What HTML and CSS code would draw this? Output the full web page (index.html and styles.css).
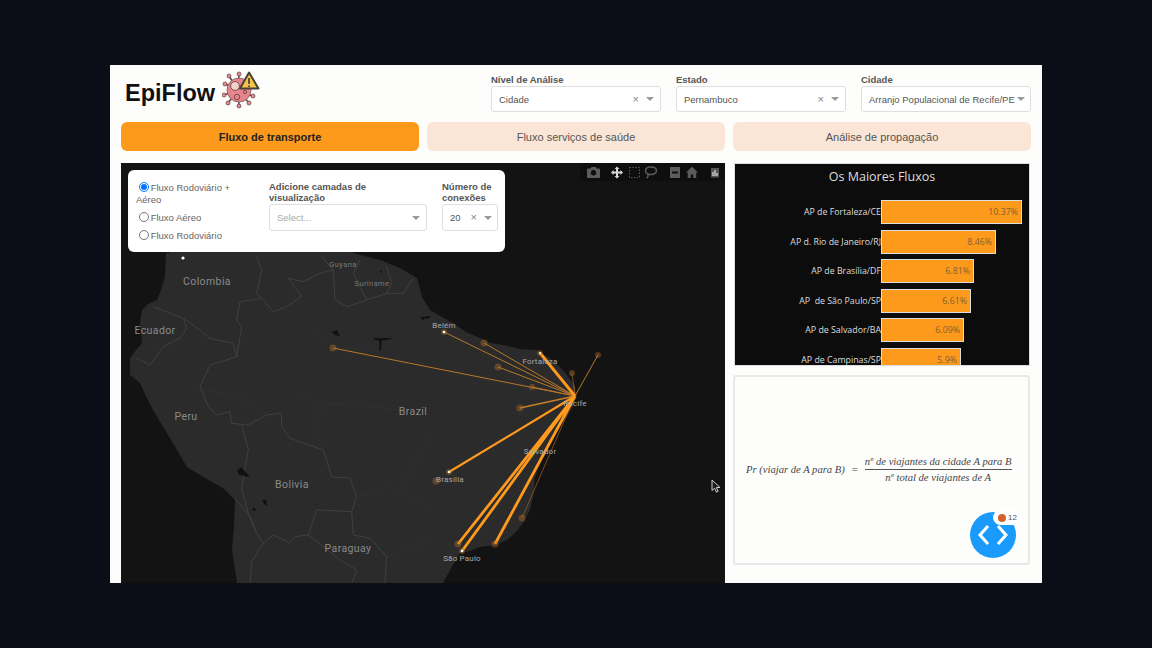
FILE: index.html
```html
<!DOCTYPE html>
<html lang="pt">
<head>
<meta charset="utf-8">
<title>EpiFlow</title>
<link rel="stylesheet" href="styles.css">
</head>
<body>
<div class="page">
  <header class="header">
    <div class="brand">
      <span class="brand-name">EpiFlow</span>
      <svg class="brand-icon" viewBox="0 0 38 38" width="38" height="38">
        <g stroke="#5a4444" stroke-width="1.5" stroke-linecap="round" fill="none">
          <path d="M16 19 3 13M16 19 2 24M16 19 6 32M16 19l1 16M16 19l11 13M16 19 30 25M16 19 7 5M16 19 17 3M16 19l11-12"/>
        </g>
        <g fill="#e58a8f" stroke="#5a4040" stroke-width=".7">
          <circle cx="3" cy="13" r="2"/><circle cx="2" cy="24" r="2"/><circle cx="6" cy="32" r="2"/><circle cx="17" cy="35" r="2"/><circle cx="27" cy="32" r="2"/><circle cx="31" cy="25" r="2"/><circle cx="7" cy="5" r="2"/><circle cx="17" cy="3" r="2"/>
        </g>
        <circle cx="17" cy="19" r="12" fill="#e8858c" stroke="#7a5a5a" stroke-width=".8"/>
        <circle cx="13" cy="15" r="4.400" fill="#efd3c5" stroke="#6a4a4a" stroke-width=".9"/>
        <circle cx="15" cy="26" r="2.800" fill="#e8858c" stroke="#6a4a4a" stroke-width=".9"/>
        <circle cx="23" cy="21" r="1.600" fill="#e8858c" stroke="#6a4a4a" stroke-width=".9"/>
        <path d="M27 1.500 36.500 17.500H18Z" fill="#f6c64a" stroke="#4a4036" stroke-width="2" stroke-linejoin="round"/>
        <path d="M27 7v6M27 14.500v1.500" stroke="#4a4036" stroke-width="1.700"/>
      </svg>
    </div>
    <div class="filters">
      <div class="filter">
        <div class="field-label">Nível de Análise</div>
        <div class="control"><span class="control-value">Cidade</span><span class="clear">×</span><span class="caret"></span></div>
      </div>
      <div class="filter">
        <div class="field-label">Estado</div>
        <div class="control"><span class="control-value">Pernambuco</span><span class="clear">×</span><span class="caret"></span></div>
      </div>
      <div class="filter">
        <div class="field-label">Cidade</div>
        <div class="control control-tight"><span class="control-value">Arranjo Populacional de Recife/PE</span><span class="caret"></span></div>
      </div>
    </div>
  </header>

  <nav class="tabs">
    <div class="tab tab-active">Fluxo de transporte</div>
    <div class="tab">Fluxo serviços de saúde</div>
    <div class="tab">Análise de propagação</div>
  </nav>

  <main class="content">
    <section class="map">
      <svg class="map-canvas" viewBox="0 0 604 420" width="604" height="420">
        <g transform="translate(-121 -163)">
          <path class="land" d="M170 172V253L166 253 165 277 161 290 157 300 148 304 142 310 140 323 142 343 136 350 130 358 130 375 140 383 146 396 153 410 165 430 177 450 187 467 205 478 223 488 235 500 234 525 232 550 237 583H443L450 570 460 553 470 551 480 547 495 545 507 540 516 532 523 523 530 510 533 497 535 477 540 465 543 453 553 433 560 426 567 417 572 408 577 397 575 390 573 383 566 374 560 367 549 358 537 350 520 349 503 345 490 343 480 338 466 332 453 323 440 316 430 310 422 297 417 278 400 268 380 260 353 253 340 172Z"/>
        </g>
        <g transform="translate(-1 87) scale(.3333)">
          <path class="border" d="M100 170 190 205 240 240 270 265 340 280 350 320 270 345 240 410 265 470 290 495 330 485 335 520 385 525 440 495 485 490 485 530 510 565 610 600 635 680 690 685 710 740 695 785 590 780 565 855 525 860 510 880 460 855 430 880 410 850 385 790 365 715 385 600 365 525"/>
          <path class="border" d="M410 20 425 60 410 130 425 145 360 155 350 210 365 230 350 320M425 145 460 185 500 170 545 140 505 85 550 95 600 70 640 60 605 20M640 60 645 150 680 170 740 150 700 70 720 30M740 150 800 130 815 100 800 50M800 130 850 130 880 85"/>
          <path class="border" d="M345 745 390 800 410 850M430 880 395 935 390 1000M565 855 660 930 710 960 695 1000M695 785 700 855 750 865 800 920 795 1000M190 205 200 235 180 265 130 290 90 345 50 325"/>
          <path class="border-faint" d="M240 420 350 435 440 490M540 435 600 460 720 465 840 480M600 460V600M710 740 800 710 930 770M800 920 930 870M570 225 640 290 760 300M930 560 850 700"/>
          <path class="lake" d="M635 245 650 240 660 258 645 255ZM762 264 815 264 812 268 786 272 782 302 778 302 778 272 762 268ZM352 660 365 652 390 682 372 678 355 672ZM428 750 438 748 442 768 432 762ZM400 772 412 780 398 782ZM780 62 786 62 784 72ZM900 202 930 198 930 204 912 206 910 214 906 206Z"/>
        </g>
        <g transform="translate(-121 -163)">
          <g class="flow">
            <path class="flow-thin" d="M333 348 575 396M444 332 575 396M484 343 575 396M498 367 575 396M598 355 575 396M532 387 575 396"/>
            <path class="flow-faint" d="M522 518 575 396M572 373 575 396M574 385 575 396"/>
            <path class="flow-mid" d="M520 408 575 396"/>
            <path class="flow-wide" d="M449 472 575 396"/>
            <path class="flow-thick" d="M540 353 575 396M458 544 575 396M462 551 575 396M495 544 575 396"/>
          </g>
          <g class="node">
            <circle cx="333" cy="348" r="3.500"/><circle cx="484" cy="343" r="3.500"/><circle cx="498" cy="367" r="3.500"/><circle cx="598" cy="355" r="3"/><circle cx="532" cy="387" r="3"/><circle cx="520" cy="408" r="3.500"/><circle cx="572" cy="373" r="3"/><circle cx="436" cy="481" r="3.500"/><circle cx="458" cy="544" r="3.500"/><circle cx="495" cy="544" r="3.500"/><circle cx="522" cy="518" r="3.500"/><circle cx="444" cy="332" r="3"/><circle cx="540" cy="353" r="3"/><circle cx="449" cy="472" r="3"/><circle cx="462" cy="551" r="3"/>
          </g>
          <g class="city-dot">
            <circle cx="183" cy="258" r="1.600"/><circle cx="444" cy="332" r="1.300"/><circle cx="540" cy="353" r="1.100"/><circle cx="449" cy="472" r="1.300"/><circle cx="462" cy="551" r="1.300"/>
          </g>
          <g class="map-label">
            <text x="207" y="285">Colombia</text>
            <text x="155" y="334">Ecuador</text>
            <text x="186" y="420">Peru</text>
            <text x="292" y="488">Bolivia</text>
            <text x="348" y="552">Paraguay</text>
            <text x="413" y="415">Brazil</text>
            <text class="map-label-small" x="343" y="267">Guyana</text>
            <text class="map-label-small" x="372" y="286">Suriname</text>
            <text class="map-label-city" x="444" y="328">Belém</text>
            <text class="map-label-city" x="540" y="364">Fortaleza</text>
            <text class="map-label-city" x="575" y="406">Recife</text>
            <text class="map-label-city" x="540" y="454">Salvador</text>
            <text class="map-label-city" x="450" y="482">Brasília</text>
            <text class="map-label-city" x="462" y="561">São Paulo</text>
          </g>
        </g>
      </svg>

      <div class="modebar">
        <svg viewBox="0 0 145 18" width="145" height="18">
          <path class="mode-dim" d="M8 5.500h2.500l1-1.500h4l1 1.500H19a1 1 0 0 1 1 1V14a1 1 0 0 1-1 1H8a1 1 0 0 1-1-1V6.500a1 1 0 0 1 1-1ZM13.500 7a2.800 2.800 0 1 0 .01 0Z" fill-rule="evenodd"/>
          <path class="mode-on" d="M37 3.500 39.500 6H38v2.500h2.500V7l2.500 2.500L40.500 12v-1.500H38V13h1.500L37 15.500 34.500 13H36v-2.500h-2.500V12L31 9.500 33.500 7v1.500H36V6h-1.500Z"/>
          <rect class="mode-dash" x="49.500" y="4.500" width="10" height="10"/>
          <path class="mode-line" d="M71 4c3.500 0 5.500 1.800 5.500 3.800S74 11.500 71 11.500c-3.500 0-5.500-1.700-5.500-3.700S67.500 4 71 4ZM68 11c.5 2-.5 3.500-1.500 4"/>
          <path class="mode-dim" d="M90 4h10v11H90ZM92 8.500v2h6v-2Z" fill-rule="evenodd"/>
          <path class="mode-dim" d="M112 3.800 118 9.500h-1.800V15h-3v-3.500h-2.500V15h-3V9.500H106Z"/>
          <path class="mode-logo" d="M131 5h8v9.500h-8Z"/>
          <path class="mode-logo-mark" d="M133 13V9M135 13V7M137 13v-3"/>
        </svg>
      </div>

      <div class="controls-card">
        <div class="radios">
          <label class="radio"><input type="radio" name="fluxo" checked> Fluxo Rodoviário + Aéreo</label>
          <label class="radio"><input type="radio" name="fluxo"> Fluxo Aéreo</label>
          <label class="radio"><input type="radio" name="fluxo"> Fluxo Rodoviário</label>
        </div>
        <div class="layer-field">
          <div class="field-label">Adicione camadas de visualização</div>
          <div class="control"><span class="control-value placeholder">Select...</span><span class="caret"></span></div>
        </div>
        <div class="count-field">
          <div class="field-label">Número de conexões</div>
          <div class="control"><span class="control-value">20</span><span class="clear">×</span><span class="caret"></span></div>
        </div>
      </div>

      <svg class="pointer" viewBox="0 0 10 14" width="10" height="14">
        <path d="M1 1v10.500l2.600-2.300 1.800 4 1.800-.8-1.800-3.900H9Z" fill="#1a1a1a" stroke="#d0d0d0" stroke-width="1"/>
      </svg>
    </section>

    <aside class="side">
      <section class="chart">
        <h2 class="chart-title">Os Maiores Fluxos</h2>
        <div class="chart-rows">
          <div class="chart-row"><span class="bar-label">AP de Fortaleza/CE</span><span class="bar" style="width:141px">10.37%</span></div>
          <div class="chart-row"><span class="bar-label">AP d. Rio de Janeiro/RJ</span><span class="bar" style="width:115px">8.46%</span></div>
          <div class="chart-row"><span class="bar-label">AP de Brasília/DF</span><span class="bar" style="width:93px">6.81%</span></div>
          <div class="chart-row"><span class="bar-label">AP&nbsp; de São Paulo/SP</span><span class="bar" style="width:90px">6.61%</span></div>
          <div class="chart-row"><span class="bar-label">AP de Salvador/BA</span><span class="bar" style="width:83px">6.09%</span></div>
          <div class="chart-row"><span class="bar-label">AP de Campinas/SP</span><span class="bar" style="width:80px">5.9%</span></div>
        </div>
      </section>
      <section class="formula-card">
        <div class="formula">
          <span class="formula-left">Pr (viajar de A para B)</span>
          <span class="formula-eq">=</span>
          <span class="fraction">
            <span class="numerator">nº de viajantes da cidade A para B</span>
            <span class="denominator">nº total de viajantes de A</span>
          </span>
        </div>
        <div class="fab">
          <svg viewBox="0 0 46 46" width="46" height="46">
            <path d="M18 14 10 23l8 9M28 14l8 9-8 9" fill="none" stroke="#fff" stroke-width="3"/>
          </svg>
          <span class="fab-badge"><span class="fab-dot"></span>12</span>
        </div>
      </section>
    </aside>
  </main>
</div>
</body>
</html>
```

FILE: styles.css
```css
* { box-sizing: border-box; }

html, body { margin: 0; height: 100%; }

body {
  background-color: #0a0d15;
  background-image: conic-gradient(#0d1019 25%, transparent 0 50%, #0d1019 0 75%, transparent 0);
  background-size: 4px 4px;
  overflow: hidden;
  font-family: "Liberation Sans", Arial, sans-serif;
}

.page {
  width: 932px;
  height: 518px;
  margin: 65px 0 0 110px;
  padding: 0 11px;
  background: #fdfdfc;
  overflow: hidden;
}

.header {
  display: flex;
  justify-content: space-between;
  height: 57px;
}

.brand {
  display: flex;
  align-items: center;
  gap: 7px;
  height: 46px;
  padding: 3px 0 0 4px;
}

.brand-name {
  margin-top: 8px;
  font-size: 23.500px;
  font-weight: 700;
  color: #111;
}

.filters {
  display: flex;
  gap: 15px;
  padding-top: 9px;
}

.filter { width: 170px; }

.field-label {
  font-size: 9.500px;
  font-weight: 700;
  line-height: 11px;
  color: #555;
}

.filter .field-label { margin-bottom: 1px; }

.control {
  display: flex;
  align-items: center;
  height: 26px;
  padding: 0 6px 0 7px;
  background: #fff;
  border: 1px solid #dedede;
  border-radius: 3px;
  font-size: 9.500px;
  color: #555;
}

.control-tight { padding-right: 5px; }

.control-value {
  flex: 1;
  white-space: nowrap;
  overflow: hidden;
}

.placeholder { color: #aaa; }

.clear {
  margin-right: 7px;
  font-size: 11px;
  line-height: 11px;
  color: #888;
}

.caret {
  width: 0;
  height: 0;
  border: 4px solid transparent;
  border-top: 4px solid #999;
  border-bottom: 0;
}

.tabs {
  display: grid;
  grid-template-columns: repeat(3, 298px);
  gap: 8px;
  height: 29px;
  margin-bottom: 12px;
}

.tab {
  display: flex;
  align-items: center;
  justify-content: center;
  background: #fae5d6;
  border-radius: 6px;
  font-size: 11px;
  color: #555;
}

.tab-active {
  background: #fd9a1b;
  font-weight: 700;
  color: #222;
}

.content {
  display: flex;
  gap: 8px;
}

.map {
  position: relative;
  flex: none;
  width: 604px;
  height: 420px;
  background: #131313;
  overflow: hidden;
}

.map-canvas { display: block; }

.land { fill: #2b2b2b; }

.border {
  fill: none;
  stroke: #454545;
  stroke-width: 2.400;
}

.border-faint {
  fill: none;
  stroke: #383838;
  stroke-width: 2;
  stroke-dasharray: 6 5;
}

.lake { fill: #111; }

.flow path { fill: none; stroke: #ff9a1f; }
.flow .flow-faint { stroke: #8f5a1f; stroke-width: .8; }
.flow .flow-thin { stroke: #b87828; stroke-width: 1; }
.flow .flow-mid { stroke: #c98126; stroke-width: 1.600; }
.flow .flow-wide { stroke-width: 2.200; }
.flow .flow-thick { stroke-width: 2.800; }

.node circle { fill: #b9742c; opacity: .4; }

.city-dot circle { fill: #fff; }

.map-label text {
  font-family: "Roboto", "Liberation Sans", sans-serif;
  font-size: 10.500px;
  letter-spacing: .4px;
  text-anchor: middle;
  fill: #8a8a8a;
}

.map-label .map-label-small {
  font-size: 7.500px;
  fill: #777;
}

.map-label .map-label-city {
  font-size: 8px;
  letter-spacing: .2px;
  fill: #a9a9a9;
}

.modebar {
  position: absolute;
  top: 0;
  right: 0;
  height: 18px;
  background: #0e0e0e;
}

.modebar svg { display: block; }

.mode-dim { fill: #5c5c5c; }
.mode-on { fill: #d8d8d8; }
.mode-dash { fill: none; stroke: #5c5c5c; stroke-dasharray: 1.500 1.500; }
.mode-line { fill: none; stroke: #5c5c5c; stroke-width: 1.500; }
.mode-logo { fill: #555; }
.mode-logo-mark { stroke: #ddd; stroke-width: 1.200; }

.controls-card {
  position: absolute;
  top: 7px;
  left: 7px;
  display: flex;
  width: 377px;
  height: 82px;
  padding: 11px 7px 0 8px;
  background: #fff;
  border-radius: 6px;
}

.radios {
  display: flex;
  flex: none;
  flex-direction: column;
  gap: 6px;
  width: 133px;
  padding: 1px 12px 0 0;
}

.radio {
  display: block;
  font-size: 9.500px;
  line-height: 12px;
  color: #666;
}

.radio input {
  width: 10px;
  height: 10px;
  margin: 0 -1px 0 3px;
  vertical-align: -1px;
}

.layer-field { flex: none; width: 158px; margin-right: 15px; }

.layer-field .field-label { padding-right: 40px; }

.count-field { flex: none; width: 56px; }

.controls-card .control { height: 27px; margin-top: 1px; }

.count-field .control { padding-right: 5px; }

.side {
  display: flex;
  flex-direction: column;
  gap: 9px;
  width: 298px;
}

.chart {
  width: 296px;
  height: 203px;
  margin-left: 1px;
  background: #0c0c0c;
  border: 1px solid #ddd;
  overflow: hidden;
}

.chart-title {
  margin: 0;
  padding-top: 4px;
  font-family: "Open Sans", sans-serif;
  font-size: 12.500px;
  font-weight: 400;
  line-height: 17px;
  text-align: center;
  color: #ddd;
}

.chart-rows {
  display: flex;
  flex-direction: column;
  gap: 5.500px;
  padding-top: 15px;
}

.chart-row {
  display: flex;
  align-items: center;
  height: 24px;
}

.bar-label {
  width: 146px;
  flex: none;
  text-align: right;
  font-family: "Open Sans", sans-serif;
  font-size: 8.800px;
  color: #ddd;
  white-space: nowrap;
}

.bar {
  height: 24px;
  padding-right: 3px;
  background: #fd9a1b;
  border: 1px solid #ddd;
  font-family: "Open Sans", sans-serif;
  font-size: 8.800px;
  line-height: 22px;
  text-align: right;
  color: #7d5f38;
}

.formula-card {
  position: relative;
  display: flex;
  align-items: center;
  width: 297px;
  height: 190px;
  padding: 0 0 2px 11px;
  background: #fdfdfc;
  border: 2px solid #e8e8e8;
  border-radius: 3px;
}

.formula {
  display: flex;
  align-items: center;
  gap: 6px;
  font-family: "Liberation Serif", "Times New Roman", serif;
  font-style: italic;
  font-size: 10.600px;
  color: #444;
  white-space: nowrap;
}

.formula-eq { font-style: normal; margin: 0 1px; }

.fraction {
  display: flex;
  flex-direction: column;
  align-items: center;
}

.numerator {
  padding: 0 0 2px;
  border-bottom: 1px solid #555;
}

.denominator { padding-top: 2px; }

.fab {
  position: absolute;
  right: 12px;
  bottom: 5px;
  width: 46px;
  height: 46px;
  background: #1a9bfb;
  border-radius: 50%;
}

.fab svg { display: block; }

.fab-badge {
  position: absolute;
  top: -2px;
  left: 23px;
  display: flex;
  align-items: center;
  gap: 2px;
  height: 15px;
  padding: 0 5px;
  background: #fff;
  border-radius: 8px;
  font-size: 8px;
  color: #555;
}

.fab-dot {
  width: 8px;
  height: 8px;
  background: #d4602a;
  border-radius: 50%;
}

.pointer {
  position: absolute;
  top: 316px;
  left: 590px;
}
```
